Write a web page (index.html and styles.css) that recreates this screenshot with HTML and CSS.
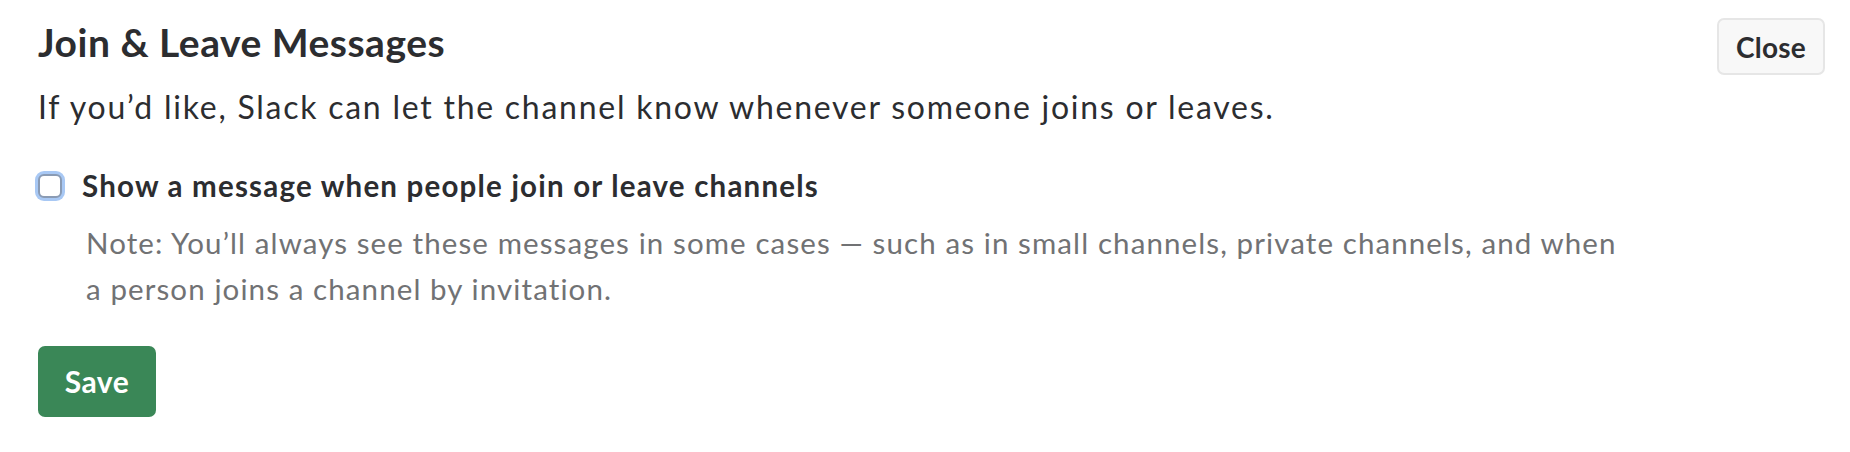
FILE: index.html
```html
<!DOCTYPE html>
<html>
<head>
<meta charset="utf-8">
<link rel="stylesheet" href="styles.css">
</head>
<body>
<div class="page">
  <div class="header">
    <h1 class="title">Join &amp; Leave Messages</h1>
    <button class="close-btn">Close</button>
  </div>
  <p class="subtitle">If you’d like, Slack can let the channel know whenever someone joins or leaves.</p>
  <label class="check-row">
    <span class="checkbox"></span>
    <span class="check-label">Show a message when people join or leave channels</span>
  </label>
  <p class="note">Note: You’ll always see these messages in some cases — such as in small channels, private channels, and when<br>a person joins a channel by invitation.</p>
  <button class="save-btn">Save</button>
</div>
</body>
</html>
```
FILE: styles.css
```css
html, body {
  margin: 0;
  background: #ffffff;
}
.page {
  font-family: Lato, "Noto Sans", sans-serif;
  padding: 18px 25px 0 38px;
  color: #1d1c1d;
}
.header {
  display: flex;
  justify-content: space-between;
  align-items: flex-start;
}
.title {
  margin: 1px 0 0 0;
  font-size: 39px;
  line-height: 46px;
  font-weight: 700;
  letter-spacing: 0.5px;
  color: #2c2d30;
}
.close-btn {
  width: 108px;
  height: 57px;
  background: #f8f8f8;
  border: 2px solid #e6e6e6;
  border-radius: 7px;
  font-family: Lato, sans-serif;
  font-weight: 700;
  font-size: 28px;
  letter-spacing: 0.2px;
  color: #2c2d30;
  padding: 0;
}
.subtitle {
  margin: 12px 0 0 0;
  font-size: 32px;
  line-height: 40px;
  letter-spacing: 1.75px;
  color: #2c2d30;
}
.check-row {
  display: flex;
  align-items: center;
  margin-top: 41px;
  height: 36px;
}
.checkbox {
  box-sizing: border-box;
  width: 24px;
  height: 24px;
  flex: none;
  border: 2px solid #8a9bb4;
  border-radius: 6px;
  background: #fff;
  box-shadow: 0 0 0 3px #a8c8f4;
}
.check-label {
  margin-left: 20px;
  font-size: 29.5px;
  font-weight: 700;
  line-height: 36px;
  letter-spacing: 1.2px;
  color: #2c2d30;
}
.note {
  margin: 15.5px 0 0 48px;
  font-size: 29.5px;
  line-height: 46px;
  letter-spacing: 1.1px;
  color: #717274;
}
.save-btn {
  display: block;
  margin-top: 34px;
  width: 118px;
  height: 71px;
  background: #3a8757;
  border: none;
  border-radius: 7px;
  color: #ffffff;
  font-family: Lato, sans-serif;
  font-weight: 700;
  font-size: 30px;
  letter-spacing: 0.5px;
  padding: 0;
}
```
